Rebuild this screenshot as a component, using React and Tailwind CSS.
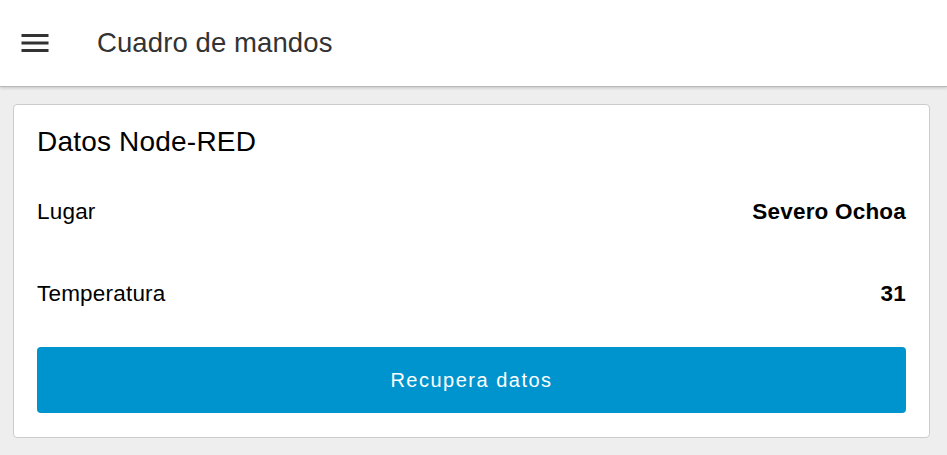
import React from 'react';

function MenuIcon() {
  return (
    <svg width="36" height="36" viewBox="0 0 24 24" fill="#333333">
      <path d="M3 18h18v-2H3v2zm0-5h18v-2H3v2zm0-7v2h18V6H3z" />
    </svg>
  );
}

function Row({ label, value }) {
  return (
    <div className="flex h-[82px] items-center justify-between text-[22.5px] leading-[26px] text-black">
      <span className="tracking-[0.2px]">{label}</span>
      <span className="font-bold tracking-[0.2px]">{value}</span>
    </div>
  );
}

export default function App() {
  return (
    <div className="flex h-[455px] w-[947px] flex-col overflow-hidden bg-[#eeeeee] font-['Liberation_Sans',Arial,sans-serif]">
      <header className="relative z-10 flex h-[87px] shrink-0 items-center border-b border-[#b8b8b8] bg-white shadow-[0_1px_3px_rgba(0,0,0,0.18)]">
        <div className="ml-[17px] flex h-9 w-9 items-center justify-center">
          <MenuIcon />
        </div>
        <h1 className="ml-[44px] text-[27.5px] leading-[30px] tracking-[0.1px] text-[#333333]">Cuadro de mandos</h1>
      </header>

      <main className="pl-[13px] pr-[17px] pt-[17px]">
        <section className="rounded border border-[#cccccc] bg-white px-[23px] pb-[24px] pt-[22px]">
          <h2 className="text-[28px] leading-[30px] tracking-[0.2px] text-black">Datos Node-RED</h2>
          <div className="mt-[14px]">
            <Row label="Lugar" value="Severo Ochoa" />
            <Row label="Temperatura" value="31" />
          </div>
          <button className="mt-[12px] flex h-[66px] w-full items-center justify-center rounded bg-[#0094ce] text-[20px] tracking-[1.5px] text-white">
            Recupera datos
          </button>
        </section>
      </main>
    </div>
  );
}
